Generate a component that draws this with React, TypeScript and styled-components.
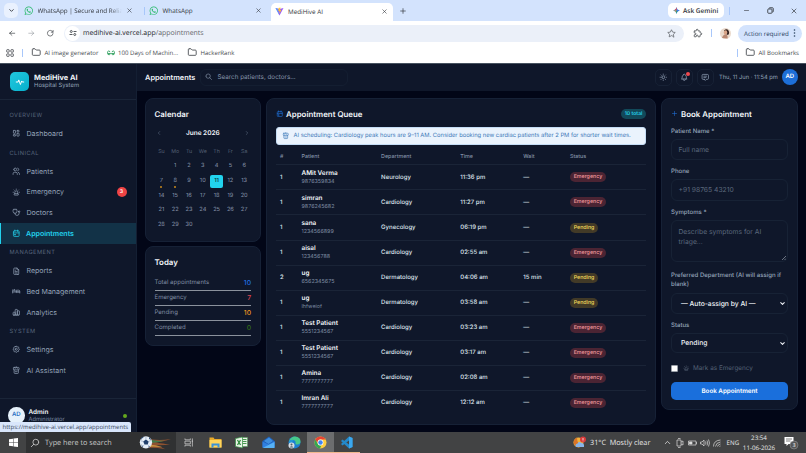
import type { ReactNode } from "react";
import styled, { createGlobalStyle, css } from "styled-components";
import {
  TbArrowLeft,
  TbArrowRight,
  TbBed,
  TbBell,
  TbCalendarEvent,
  TbChartBar,
  TbChevronDown,
  TbChevronLeft,
  TbChevronRight,
  TbChevronUp,
  TbFolder,
  TbFileText,
  TbLayoutDashboard,
  TbLayoutGrid,
  TbMessage2,
  TbMinus,
  TbPlus,
  TbPuzzle,
  TbReload,
  TbSearch,
  TbSettings,
  TbStar,
  TbStethoscope,
  TbSun,
  TbUrgent,
  TbUsers,
  TbX,
} from "react-icons/tb";
import { FaWhatsapp } from "react-icons/fa";

const GlobalStyle = createGlobalStyle`
  * {
    box-sizing: border-box;
  }
  body {
    margin: 0;
    overflow: hidden;
    background: #020617;
    text-rendering: geometricPrecision;
  }
  svg {
    flex-shrink: 0;
    display: block;
  }
`;

const Screen = styled.div`
  width: 806px;
  height: 453px;
  display: flex;
  flex-direction: column;
  overflow: hidden;
  position: relative;
  font-family: "Inter", "Liberation Sans", sans-serif;
  white-space: nowrap;
`;

/* ---------- browser ---------- */

const uiFont = css`
  font-family: "Open Sans", "Noto Sans", sans-serif;
`;

const TabStrip = styled.div`
  height: 21px;
  flex-shrink: 0;
  display: flex;
  align-items: center;
  padding-left: 4px;
  background: #d3e3fd;
  color: #30343a;
  font-size: 6.3px;
  ${uiFont}
`;

const TabSearch = styled.div`
  width: 14px;
  height: 15px;
  margin-right: 6px;
  border-radius: 5px;
  background: #e9f1fe;
  display: flex;
  align-items: center;
  justify-content: center;
`;

const Tab = styled.div<{ $width: number; $active?: boolean }>`
  width: ${({ $width }) => $width}px;
  height: ${({ $active }) => ($active ? "18px" : "15px")};
  margin-top: ${({ $active }) => ($active ? "3px" : "0")};
  padding: ${({ $active }) => ($active ? "0 5px 2px 4px" : "0 6px 0 0")};
  display: flex;
  align-items: center;
  gap: 4px;
  border-radius: 5px 5px 0 0;
  background: ${({ $active }) => ($active ? "#fff" : "transparent")};
`;

const TabTitle = styled.span<{ $fade?: boolean }>`
  flex: 1;
  min-width: 0;
  ${({ $fade }) =>
    $fade && "mask-image: linear-gradient(90deg, #000 85%, transparent);"}
`;

const Divider = styled.i<{ $space: string }>`
  width: 1px;
  height: 8px;
  margin: ${({ $space }) => $space};
  background: #a8c7fa;
  flex-shrink: 0;
`;

const Spacer = styled.div<{ $width?: number }>`
  flex: ${({ $width }) => ($width ? `0 0 ${$width}px` : "1")};
`;

const Gemini = styled.div`
  width: 56px;
  height: 15px;
  display: flex;
  align-items: center;
  gap: 3px;
  padding-left: 5px;
  border-radius: 5px;
  background: #fff;
  font-size: 6.5px;
  font-weight: 600;
`;

const WindowButtons = styled.div`
  display: flex;
  gap: 16.5px;
  padding-right: 8px;
  align-items: center;
`;

const Toolbar = styled.div`
  height: 24px;
  flex-shrink: 0;
  display: flex;
  align-items: center;
  padding: 0 4px 0 8px;
  background: #fff;
  color: #45494e;
  ${uiFont}
`;

const NavButtons = styled.div`
  width: 56px;
  display: flex;
  gap: 10.5px;
`;

const Omnibox = styled.div`
  width: 620px;
  height: 17px;
  padding-right: 8px;
  display: flex;
  align-items: center;
  border-radius: 9px;
  background: #ebf0f9;
  font-size: 6.95px;
  color: #5f6368;
  b {
    font-weight: 400;
    color: #202124;
  }
`;

const SiteInfo = styled.div`
  width: 15px;
  height: 15px;
  margin: 0 3px 0 1px;
  border-radius: 50%;
  background: #fff;
  display: flex;
  align-items: center;
  justify-content: center;
`;

const ActionPill = styled.div`
  width: 64px;
  height: 17px;
  padding: 0 6px;
  display: flex;
  align-items: center;
  justify-content: space-between;
  border-radius: 9px;
  background: #d3e3fd;
  font-size: 6.2px;
  color: #28415f;
`;

const Bookmarks = styled.div`
  height: 18px;
  flex-shrink: 0;
  display: flex;
  align-items: center;
  padding: 0 7px 3px 5px;
  background: #fff;
  color: #474b50;
  font-size: 6.08px;
  ${uiFont}
`;

const Bookmark = styled.div<{ $width?: number }>`
  display: flex;
  align-items: center;
  gap: 3px;
  width: ${({ $width }) => ($width ? `${$width}px` : "auto")};
`;

/* ---------- shell ---------- */

const Shell = styled.div`
  height: 369px;
  flex-shrink: 0;
  display: flex;
  border-top: 1px solid #47525f;
  background: #020617;
`;

const SidebarBox = styled.aside`
  width: 136.5px;
  flex-shrink: 0;
  display: flex;
  flex-direction: column;
  background: #0f172a;
  border-right: 1px solid #141f33;
`;

const Brand = styled.div`
  height: 36px;
  padding: 0 10px;
  display: flex;
  align-items: center;
  gap: 5px;
  border-bottom: 1px solid #1a2538;
`;

const BrandLogo = styled.div`
  width: 19px;
  height: 19px;
  border-radius: 5px;
  background: linear-gradient(135deg, #22c8de, #06b0cc);
  color: #fff;
  display: flex;
  align-items: center;
  justify-content: center;
`;

const BrandName = styled.div`
  font-size: 7.4px;
  font-weight: 700;
  line-height: 9px;
  color: #f1f5f9;
`;

const BrandSub = styled.div`
  padding-top: 0.5px;
  font-size: 5.9px;
  line-height: 8px;
  color: #94a3b8;
`;

const Menu = styled.nav`
  flex: 1;
  padding-top: 6.3px;
`;

const MenuLabel = styled.div`
  height: 16.9px;
  padding: 5.7px 0 0 9.5px;
  font-size: 5.7px;
  line-height: 8px;
  letter-spacing: 0.45px;
  color: #56647a;
`;

const MenuItem = styled.div<{ $active?: boolean }>`
  height: 20.7px;
  padding: 0 9px 0 ${({ $active }) => ($active ? "10.5px" : "12px")};
  display: flex;
  align-items: center;
  gap: 6px;
  font-size: 7.05px;
  font-weight: ${({ $active }) => ($active ? 600 : 400)};
  color: ${({ $active }) => ($active ? "#22d3ee" : "#94a3b8")};
  background: ${({ $active }) => ($active ? "#123247" : "transparent")};
  ${({ $active }) => $active && "border-left: 1.5px solid #22d3ee;"}
`;

const Count = styled.span`
  width: 10px;
  height: 10px;
  margin-left: auto;
  border-radius: 50%;
  background: #ef4444;
  color: #fff;
  font-size: 5.2px;
  font-weight: 600;
  line-height: 10px;
  text-align: center;
`;

const Account = styled.div`
  height: 34px;
  padding: 0 9px 0 8px;
  display: flex;
  align-items: center;
  gap: 4px;
  border-top: 1px solid #1a2538;
`;

const Avatar = styled.div<{ $light?: boolean }>`
  width: 16.5px;
  height: 16.5px;
  flex-shrink: 0;
  border-radius: 50%;
  background: ${({ $light }) => ($light ? "#e6f1fb" : "#1d6fd8")};
  color: ${({ $light }) => ($light ? "#2b72c4" : "#fff")};
  font-size: 6px;
  font-weight: 600;
  line-height: 16.5px;
  text-align: center;
`;

const AccountName = styled.div`
  font-size: 6.4px;
  font-weight: 600;
  line-height: 8px;
  color: #f1f5f9;
`;

const AccountRole = styled.div`
  font-size: 5.7px;
  line-height: 8px;
  color: #7c8ba1;
`;

const Online = styled.i`
  width: 4px;
  height: 4px;
  margin-left: auto;
  border-radius: 50%;
  background: #65a81e;
`;

const LinkStatus = styled.div`
  position: absolute;
  left: 0;
  bottom: 21px;
  width: 131px;
  height: 10.5px;
  padding-left: 2.5px;
  border-top-right-radius: 2px;
  background: #d9e6fb;
  color: #3b4a5e;
  font-size: 6.05px;
  line-height: 10.5px;
  ${uiFont}
`;

const Main = styled.main`
  flex: 1;
  display: flex;
  flex-direction: column;
`;

const TopBar = styled.header`
  height: 27px;
  padding: 0 8px 1px 8.5px;
  display: flex;
  align-items: center;
  background: #0f172a;
`;

const PageTitle = styled.h1`
  width: 55px;
  margin: 0;
  font-size: 7.4px;
  font-weight: 600;
  color: #f1f5f9;
`;

const SearchBox = styled.div`
  width: 148px;
  height: 17px;
  padding-left: 4px;
  display: flex;
  align-items: center;
  gap: 5px;
  border: 1px solid #141e31;
  border-radius: 6px;
  font-size: 6.3px;
  color: #8593a8;
`;

const IconButton = styled.div`
  width: 17px;
  height: 17px;
  margin-right: 4px;
  display: flex;
  align-items: center;
  justify-content: center;
  position: relative;
  border: 1px solid #172135;
  border-radius: 5px;
  color: #94a3b8;
`;

const Alert = styled.i`
  position: absolute;
  top: 2px;
  right: 2px;
  width: 4px;
  height: 4px;
  border-radius: 50%;
  background: #f0484e;
`;

const Clock = styled.span`
  width: 62.5px;
  margin-left: 1px;
  font-size: 5.75px;
  color: #94a3b8;
`;

const Content = styled.div`
  padding: 7px 8px 0;
  display: grid;
  grid-template-columns: 116px 390.5px 137px;
  gap: 5px;
  align-items: start;
`;

const Column = styled.div`
  display: grid;
  gap: 4.5px;
`;

const Card = styled.section<{ $height: number }>`
  height: ${({ $height }) => $height}px;
  padding: 8.5px 9px;
  border: 1px solid #162136;
  border-radius: 8px;
  background: #0f172a;
`;

const CardTitle = styled.h2`
  height: 12px;
  margin: 0;
  display: flex;
  align-items: center;
  gap: 3px;
  font-size: 7.9px;
  font-weight: 600;
  color: #f1f5f9;
  svg {
    color: #1f6fd6;
  }
`;

/* ---------- calendar ---------- */

const MonthRow = styled.div`
  height: 27.5px;
  padding: 0 1.5px;
  display: flex;
  align-items: center;
  justify-content: space-between;
  font-size: 6.5px;
  font-weight: 600;
  color: #f1f5f9;
  svg {
    color: #64748b;
  }
`;

const Days = styled.div`
  display: grid;
  grid-template-columns: repeat(7, 13.8px);
  grid-template-rows: 12.5px;
  grid-auto-rows: 14.8px;
  align-items: center;
  justify-items: center;
`;

const Weekday = styled.span`
  padding-bottom: 3.5px;
  font-size: 5.3px;
  color: #536074;
`;

const Day = styled.span<{ $today?: boolean; $marked?: boolean }>`
  width: 13px;
  height: 13.6px;
  position: relative;
  border-radius: 2px;
  font-size: 5.65px;
  line-height: 13.8px;
  text-align: center;
  color: ${({ $today }) => ($today ? "#0b3a49" : "#8795aa")};
  background: ${({ $today }) => ($today ? "#22d3ee" : "transparent")};
  ${({ $today }) => $today && "font-weight: 600;"}
  ${({ $marked }) =>
    $marked &&
    css`
      &::after {
        content: "";
        position: absolute;
        left: 5.5px;
        bottom: 0.5px;
        width: 2px;
        height: 2px;
        border-radius: 1px;
        background: #c98a1c;
      }
    `}
`;

const Stats = styled.div`
  padding-top: 8.5px;
`;

const Stat = styled.div<{ $color: string }>`
  height: 15.05px;
  padding-bottom: 1px;
  display: flex;
  align-items: center;
  justify-content: space-between;
  border-bottom: 1px solid #8b929d;
  font-size: 6.05px;
  color: #7f8da3;
  b {
    font-size: 6.8px;
    font-weight: 500;
    color: ${({ $color }) => $color};
  }
`;

/* ---------- queue ---------- */

const Total = styled.span`
  height: 10px;
  margin-left: auto;
  padding: 0 3.6px;
  border-radius: 5px;
  background: #12495a;
  color: #25cfe8;
  font-size: 5.1px;
  font-weight: 600;
  line-height: 10px;
`;

const Notice = styled.div`
  height: 17.5px;
  margin-top: 7.5px;
  padding-left: 5.5px;
  display: flex;
  align-items: center;
  gap: 4px;
  border: 1px solid #c4dcf5;
  border-radius: 3px;
  background: #eaf3fd;
  color: #3c78b8;
  font-size: 5.79px;
`;

const QueueRow = styled.div<{ $head?: boolean; $last?: boolean }>`
  height: ${({ $head }) => ($head ? "20.9px" : "25.05px")};
  padding: ${({ $head }) => ($head ? "6px 0 0 4.5px" : "0 0 0 4.5px")};
  display: grid;
  grid-template-columns: 21.5px 79.6px 79.2px 63px 46.7px 1fr;
  align-items: center;
  border-bottom: 1px solid
    ${({ $last }) => ($last ? "transparent" : "#1a2437")};
  font-size: ${({ $head }) => ($head ? "5.35px" : "6px")};
  font-weight: 500;
  color: ${({ $head }) => ($head ? "#8492a7" : "#dfe6ee")};
`;

const PatientName = styled.div`
  font-size: 6.4px;
  font-weight: 600;
  line-height: 9px;
  color: #f1f5f9;
`;

const PatientPhone = styled.div`
  font-size: 5.4px;
  font-weight: 400;
  line-height: 8px;
  color: #7c8aa0;
`;

const Status = styled.span<{ $pending: boolean }>`
  height: 10px;
  padding: 0 3.7px;
  justify-self: start;
  border-radius: 5px;
  font-size: 5.3px;
  font-weight: 500;
  line-height: 10px;
  color: ${({ $pending }) => ($pending ? "#f5dc5c" : "#f49a9f")};
  background: ${({ $pending }) => ($pending ? "#423a27" : "#4b2433")};
`;

/* ---------- form ---------- */

const Label = styled.label<{ $tall?: boolean }>`
  height: ${({ $tall }) => ($tall ? "31px" : "19px")};
  padding-top: ${({ $tall }) => ($tall ? "8.7px" : "8.3px")};
  display: block;
  font-size: 6.05px;
  font-weight: 500;
  line-height: ${({ $tall }) => ($tall ? "9.5px" : "8px")};
  color: #94a3b8;
  white-space: normal;
`;

const Field = styled.div<{ $height?: number; $select?: boolean }>`
  height: ${({ $height }) => $height ?? 21.5}px;
  padding: ${({ $height }) => ($height ? "6px 6.5px" : "1px 6.5px 0")};
  display: flex;
  align-items: ${({ $height }) => ($height ? "flex-start" : "center")};
  justify-content: space-between;
  position: relative;
  border: 1px solid #172235;
  border-radius: 6px;
  font-size: 6.75px;
  line-height: 10px;
  color: #5b687c;
  white-space: normal;
  ${({ $select }) =>
    $select &&
    css`
      height: 20.5px;
      padding: 1px 1px 0 9px;
      font-weight: 500;
      color: #f1f5f9;
    `}
`;

const Grip = styled.svg`
  position: absolute;
  right: 1px;
  bottom: 1px;
`;

const CheckRow = styled.div`
  height: 28.5px;
  padding-top: 2px;
  display: flex;
  align-items: center;
  gap: 4px;
  font-size: 6.4px;
  color: #536074;
`;

const CheckBox = styled.i`
  width: 7px;
  height: 7px;
  margin-right: 0.5px;
  border: 1px solid #9aa0a8;
  border-radius: 1px;
  background: #fff;
`;

const Submit = styled.button`
  display: block;
  width: 100%;
  height: 18.5px;
  padding: 0;
  border: 0;
  border-radius: 5px;
  background: #1a6fdc;
  color: #fff;
  font: 600 6.25px "Inter", sans-serif;
  text-rendering: inherit;
`;

/* ---------- taskbar ---------- */

const Taskbar = styled.footer`
  height: 21px;
  flex-shrink: 0;
  display: flex;
  align-items: center;
  background: #424344;
  color: #e8e8e8;
  ${uiFont}
`;

const StartButton = styled.div`
  width: 26px;
  display: flex;
  justify-content: center;
`;

const TaskSearch = styled.div`
  width: 150px;
  height: 21px;
  padding: 0 4px;
  display: flex;
  align-items: center;
  gap: 5px;
  background: #303132;
  color: #c9c9c9;
  font-size: 7.25px;
`;

const TaskItem = styled.div<{ $running?: boolean; $focused?: boolean }>`
  width: 26.3px;
  height: 21px;
  display: flex;
  align-items: center;
  justify-content: center;
  background: ${({ $focused }) => ($focused ? "#6c6d6e" : "transparent")};
  border-bottom: 1px solid
    ${({ $running }) => ($running ? "#f0b78c" : "transparent")};
`;

const Weather = styled.div`
  margin-left: auto;
  width: 93px;
  display: flex;
  align-items: center;
  gap: 4px;
  font-size: 7.25px;
`;

const Tray = styled.div`
  width: 80px;
  margin-right: -3px;
  margin-left: -3px;
  display: flex;
  align-items: center;
  gap: 3.3px;
  font-size: 6.2px;
`;

const DateTime = styled.div`
  width: 38px;
  font-size: 6.2px;
  line-height: 9.5px;
  text-align: center;
`;

const Notifications = styled.div`
  width: 28px;
  padding-left: 6px;
`;

const RobotIcon = ({ size = 8.5 }: { size?: number }) => (
  <svg
    width={size}
    height={size}
    viewBox="0 0 24 24"
    fill="none"
    stroke="currentColor"
    strokeWidth="2"
    strokeLinecap="round"
    strokeLinejoin="round"
  >
    <path d="M6 4h12a2 2 0 0 1 2 2v3a2 2 0 0 1-2 2H6a2 2 0 0 1-2-2V6a2 2 0 0 1 2-2zM12 2v2M6 11v8q0 2 2 2h8q2 0 2-2v-8M9 7.500v.1M15 7.500v.1M9.500 16h5" />
  </svg>
);

const PulseIcon = () => (
  <svg
    width="10"
    height="10"
    viewBox="0 0 24 24"
    fill="none"
    stroke="#fff"
    strokeWidth="2.4"
    strokeLinecap="round"
    strokeLinejoin="round"
  >
    <path d="M3 12h4.500l1.500-5 4 11 3-8.500 1.500 2.500H21" />
  </svg>
);

const ViteIcon = () => (
  <svg width="9" height="9" viewBox="0 0 18 18">
    <path d="M1 2 9 17 17 2 9 4Z" fill="#9a5cf5" />
    <path d="M1 2 9 17 5 3Z" fill="#54a6f5" />
    <path d="m11 1-4 1v6h2v5l3.500-7h-2z" fill="#ffc531" />
  </svg>
);

const GeminiIcon = () => (
  <svg width="7" height="7" viewBox="0 0 14 14">
    <path d="M7 0Q8 6 14 7 8 8 7 14 6 8 0 7 6 6 7 0" fill="#3b7ded" />
    <path d="M7 0Q8 6 7 7L3 6Q6 6 7 0" fill="#e94b43" />
    <path d="M0 7q6 0 7 0l-1 3Q6 8 0 7" fill="#f2b51e" />
    <path d="M7 14Q6 8 7 7l2 2Q8 9 7 14" fill="#31a653" />
  </svg>
);

const TuneIcon = () => (
  <svg width="8" height="8" viewBox="0 0 16 16" fill="none" stroke="#45494e" strokeWidth="1.8">
    <path d="M9 5h6M1 11h6" />
    <circle cx="4.5" cy="5" r="2" />
    <circle cx="11.5" cy="11" r="2" />
  </svg>
);

const GfgIcon = () => (
  <svg width="8" height="6" viewBox="0 0 18 12" fill="none" stroke="#34a362" strokeWidth="2.2">
    <path d="M7 3a4 4 0 1 0 1 4H1M11 3a4 4 0 1 1-1 4h7" />
  </svg>
);

const ProfilePhoto = () => (
  <svg width="11" height="11" viewBox="0 0 22 22">
    <circle cx="11" cy="11" r="11" fill="#ead9cb" />
    <path d="M8 5q5-5 9 0 3 5-1 9l-5-2z" fill="#35231f" />
    <ellipse cx="11" cy="9" rx="3.5" ry="4.5" fill="#d9a588" />
    <path d="M4 20q2-8 8-7 4 1 3 8" fill="#b98771" />
  </svg>
);

const RestoreIcon = () => (
  <svg width="7" height="7" viewBox="0 0 14 14" fill="none" stroke="#30343a" strokeWidth="1.7">
    <rect x="1.5" y="4" width="8.5" height="8.5" rx="1.5" />
    <path d="M4 3q0-1.500 1.500-1.500H11q1.500 0 1.500 1.500v6q0 1-1.500 1" />
  </svg>
);

const WindowsIcon = () => (
  <svg width="9" height="9" viewBox="0 0 18 18" fill="#fff">
    <path d="M0 2.500 8 1.400V8.500H0zM9 1.200 18 0v8.500H9zM0 9.500h8v7.100L0 15.500zM9 9.500h9V18L9 16.800z" />
  </svg>
);

const FootballArt = () => (
  <svg width="33" height="15.5" viewBox="0 0 72 34">
    <path d="M18 6Q34 14 70 9 48 16 36 17q18 1 32 5-18-1-34 1 14 3 24 8-22-4-42-3z" fill="#8d5130" />
    <path d="M20 9q16 6 36 3-14 5-36 5z" fill="#3f7a4b" />
    <path d="M20 22q16-1 32 5-18-3-32-1z" fill="#d8a044" />
    <circle cx="15" cy="16" r="13.5" fill="#e6eef7" />
    <path d="m15 10 6 4-2 7h-7l-3-7zM3 12l4-5 4-3-5 1zM22 4l5 7-5-2zM4 20l5 5-1 2zM20 26l5-3-4 5z" fill="#22406c" />
    <path d="M15 10V4M21 14l5-2M19 21l3 4M12 21l-4 4M9 14l-5-1" stroke="#6f86a8" strokeWidth="1" />
  </svg>
);

const TaskViewIcon = () => (
  <svg width="10" height="9" viewBox="0 0 22 20" fill="none" stroke="#ddd" strokeWidth="1.5">
    <path d="M2 1v3h12V1M2 19v-3h12v3M2 7h12v6H2zM18.500 1v18M17 7h3" />
  </svg>
);

const ExplorerIcon = () => (
  <svg width="13" height="11" viewBox="0 0 26 22">
    <path d="M1 1h8l2 3h14v17H1z" fill="#e9ab2b" />
    <path d="M1 6h24v15H1z" fill="#ffd65c" />
    <path d="M5 21v-8h16v8h-4v-4H9v4z" fill="#3b93d8" />
  </svg>
);

const ExcelIcon = () => (
  <svg width="13" height="13" viewBox="0 0 26 26">
    <path d="M9 3h16v18H9z" fill="#e9f5e8" stroke="#4a9951" />
    <path d="M15 7h8M15 11h8M15 15h8" stroke="#4a9951" strokeWidth="2" />
    <path d="m1 5 14-3v22L1 21z" fill="#e9f5e8" stroke="#3a8f45" strokeWidth="1.5" />
    <path d="m5 8 6 10m0-10L5 18" stroke="#2f8a3c" strokeWidth="2.6" />
  </svg>
);

const MailIcon = () => (
  <svg width="13" height="13" viewBox="0 0 26 26">
    <path d="M1 10 14 1l11 9v13H1z" fill="#1e5fb8" />
    <path d="M4 10 14 3l8 7-9 6z" fill="#3f8fe0" />
    <path d="m1 11 12 6 12-7v13H1z" fill="#2f7fe0" />
    <path d="m1 24 24-12v12z" fill="#57b2f5" />
  </svg>
);

const EdgeIcon = () => (
  <svg width="13" height="13" viewBox="0 0 26 26">
    <circle cx="13" cy="13" r="12" fill="#1c7fd0" />
    <path d="M2 10Q6 1 14 1q11 1 11 10 0 6-7 6-4 0-3-3 1-5-4-6-5-1-9 2" fill="#47c98b" />
    <path d="M2 11q4-5 10-3-5 3-4 9 2 6 9 7Q2 26 2 11" fill="#2496d8" />
    <circle cx="7" cy="19" r="6" fill="#d5dde4" />
    <circle cx="7" cy="17" r="2" fill="#51606d" />
    <path d="M3 23q4-5 8 0" fill="#51606d" />
  </svg>
);

const ChromeIcon = () => (
  <svg width="13" height="13" viewBox="0 0 26 26">
    <circle cx="13" cy="13" r="12" fill="#ffcd40" />
    <path d="M2.600 7A12 12 0 0 1 23.400 7H13a6 6 0 0 0-5.200 9z" fill="#e94335" />
    <path d="M2.600 7 7.800 16a6 6 0 0 0 7 2.700L12 25A12 12 0 0 1 2.600 7" fill="#34a853" />
    <circle cx="13" cy="13" r="5.800" fill="#fff" />
    <circle cx="13" cy="13" r="4.500" fill="#4285f4" />
  </svg>
);

const CodeIcon = () => (
  <svg width="13" height="13" viewBox="0 0 26 26">
    <path d="m18 1 7 3v18l-7 3L2 10l3-3 13 10V9L5 19l-3-3z" fill="#2489ca" />
    <path d="m18 1 7 3v18l-7 3z" fill="#3ba7ee" />
  </svg>
);

const WeatherIcon = () => (
  <svg width="13" height="13" viewBox="0 0 26 26">
    <circle cx="11" cy="13" r="10" fill="#f2b23c" />
    <path d="M8 3a10 10 0 1 0 11 16Q8 17 8 3" fill="#db7628" />
    <path d="M6 22q-3-6 3-7 3-5 8-1 6 0 5 8z" fill="#88b4e8" />
    <circle cx="20" cy="7" r="6" fill="#d83b3b" />
    <path d="M20 4v4M20 9v1.500" stroke="#fff" strokeWidth="1.500" />
  </svg>
);

const TrayIcons = () => (
  <svg width="48" height="10" viewBox="0 0 96 20" fill="none" stroke="#dcdcdc" strokeWidth="1.4">
    <path d="M4 4h8v12H4zM6 1h5M6 19h5M12 8l4-2v8l-4-2" />
    <path d="M27 6h15v8H27zM43 8v4" />
    <path d="M29 8h5v4h-5z" fill="#dcdcdc" />
    <path d="M51 8h3l4-4v12l-4-4h-3zM61 7q2 3 0 6M64 5q3 5 0 10M67 3q4 7 0 14" />
    <path d="M77 17q0-12 14-13M81 17q1-8 10-9M85 17q1-4 6-5M89 17l2-1" />
  </svg>
);

const NotificationIcon = () => (
  <svg width="15" height="15" viewBox="0 0 30 30">
    <path d="M1 4h18v14H9l-4 4v-4H1z" fill="#fff" />
    <path d="M4 8h12M4 12h9" stroke="#555" strokeWidth="1.500" />
    <circle cx="20" cy="20" r="8" fill="#555657" stroke="#a5a5a5" />
    <text x="20" y="24" fill="#fff" fontSize="11" textAnchor="middle">3</text>
  </svg>
);

type NavEntry = { label: string; icon: ReactNode; count?: number };

const navigation: { title: string; items: NavEntry[] }[] = [
  {
    title: "OVERVIEW",
    items: [{ label: "Dashboard", icon: <TbLayoutDashboard size={8.5} /> }],
  },
  {
    title: "CLINICAL",
    items: [
      { label: "Patients", icon: <TbUsers size={8.5} /> },
      { label: "Emergency", icon: <TbUrgent size={8.5} />, count: 3 },
      { label: "Doctors", icon: <TbStethoscope size={8.5} /> },
      { label: "Appointments", icon: <TbCalendarEvent size={8.5} /> },
    ],
  },
  {
    title: "MANAGEMENT",
    items: [
      { label: "Reports", icon: <TbFileText size={8.5} /> },
      { label: "Bed Management", icon: <TbBed size={8.5} /> },
      { label: "Analytics", icon: <TbChartBar size={8.5} /> },
    ],
  },
  {
    title: "SYSTEM",
    items: [
      { label: "Settings", icon: <TbSettings size={8.5} /> },
      { label: "AI Assistant", icon: <RobotIcon /> },
    ],
  },
];

const queue = [
  ["1", "AMit Verma", "9876359834", "Neurology", "11:36 pm", "—", "Emergency"],
  ["1", "simran", "9876245682", "Cardiology", "11:27 pm", "—", "Emergency"],
  ["1", "sana", "1234566899", "Gynecology", "06:19 pm", "—", "Pending"],
  ["1", "aisal", "123456788", "Cardiology", "02:55 am", "—", "Emergency"],
  ["2", "ug", "6562345675", "Dermatology", "04:06 am", "15 min", "Pending"],
  ["1", "ug", "lhfweiof", "Dermatology", "03:58 am", "—", "Pending"],
  ["1", "Test Patient", "5551234567", "Cardiology", "03:23 am", "—", "Emergency"],
  ["1", "Test Patient", "5551234567", "Cardiology", "03:17 am", "—", "Emergency"],
  ["1", "Amina", "7777777777", "Cardiology", "02:08 am", "—", "Emergency"],
  ["1", "Imran Ali", "7777777777", "Cardiology", "12:12 am", "—", "Emergency"],
];

const stats = [
  { label: "Total appointments", value: 10, color: "#1f6fe0" },
  { label: "Emergency", value: 7, color: "#dc4450" },
  { label: "Pending", value: 10, color: "#ee9420" },
  { label: "Completed", value: 0, color: "#2f6b16" },
];

const Browser = () => (
  <>
    <TabStrip>
      <TabSearch>
        <TbChevronDown size={7} strokeWidth={3} />
      </TabSearch>
      <Tab $width={115}>
        <FaWhatsapp size={9.5} color="#25b866" />
        <TabTitle $fade>WhatsApp | Secure and Reliable</TabTitle>
        <TbX size={7} />
      </Tab>
      <Divider $space="0 4px 0 5px" />
      <Tab $width={119}>
        <FaWhatsapp size={9.5} color="#25b866" />
        <TabTitle>WhatsApp</TabTitle>
        <TbX size={7} />
      </Tab>
      <Spacer $width={3} />
      <Tab $width={122} $active>
        <ViteIcon />
        <TabTitle>MediHive AI</TabTitle>
        <TbX size={7} />
      </Tab>
      <Spacer $width={6} />
      <TbPlus size={8} />
      <Spacer />
      <Gemini>
        <GeminiIcon />
        Ask Gemini
      </Gemini>
      <Divider $space="0 13px 0 5px" />
      <WindowButtons>
        <TbMinus size={7} />
        <RestoreIcon />
        <TbX size={8} />
      </WindowButtons>
    </TabStrip>
    <Toolbar>
      <NavButtons>
        <TbArrowLeft size={8.5} />
        <TbArrowRight size={8.5} color="#a5a9ae" />
        <TbReload size={8.5} />
      </NavButtons>
      <Omnibox>
        <SiteInfo>
          <TuneIcon />
        </SiteInfo>
        <span>
          <b>medihive-ai.vercel.app</b>/appointments
        </span>
        <Spacer />
        <TbStar size={9} />
      </Omnibox>
      <Spacer />
      <TbPuzzle size={10} />
      <Divider $space="0 8px 0 8px" />
      <ProfilePhoto />
      <Spacer $width={7} />
      <ActionPill>
        Action required
        <svg width="3" height="8" viewBox="0 0 3 8" fill="#28415f">
          <circle cx="1.5" cy="1" r=".8" />
          <circle cx="1.5" cy="4" r=".8" />
          <circle cx="1.5" cy="7" r=".8" />
        </svg>
      </ActionPill>
    </Toolbar>
    <Bookmarks>
      <TbLayoutGrid size={10} />
      <Divider $space="0 8px 0 7px" />
      <Bookmark $width={76}>
        <TbFolder size={10.5} />
        AI image generator
      </Bookmark>
      <Bookmark $width={80}>
        <GfgIcon />
        100 Days of Machin...
      </Bookmark>
      <Bookmark>
        <TbFolder size={10.5} />
        HackerRank
      </Bookmark>
      <Spacer />
      <Divider $space="0 7px 0 0" />
      <Bookmark>
        <TbFolder size={10.5} />
        All Bookmarks
      </Bookmark>
    </Bookmarks>
  </>
);

const Sidebar = () => (
  <SidebarBox>
    <Brand>
      <BrandLogo>
        <PulseIcon />
      </BrandLogo>
      <div>
        <BrandName>MediHive AI</BrandName>
        <BrandSub>Hospital System</BrandSub>
      </div>
    </Brand>
    <Menu>
      {navigation.map((group) => (
        <div key={group.title}>
          <MenuLabel>{group.title}</MenuLabel>
          {group.items.map((item) => (
            <MenuItem key={item.label} $active={item.label === "Appointments"}>
              {item.icon}
              {item.label}
              {item.count && <Count>{item.count}</Count>}
            </MenuItem>
          ))}
        </div>
      ))}
    </Menu>
    <Account>
      <Avatar $light>AD</Avatar>
      <div>
        <AccountName>Admin</AccountName>
        <AccountRole>Administrator</AccountRole>
      </div>
      <Online />
    </Account>
  </SidebarBox>
);

const CalendarCard = () => (
  <Card $height={143.5}>
    <CardTitle>Calendar</CardTitle>
    <MonthRow>
      <TbChevronLeft size={6} />
      June 2026
      <TbChevronRight size={6} />
    </MonthRow>
    <Days>
      {["Su", "Mo", "Tu", "We", "Th", "Fr", "Sa"].map((day) => (
        <Weekday key={day}>{day}</Weekday>
      ))}
      <span />
      {Array.from({ length: 30 }, (_, i) => i + 1).map((day) => (
        <Day key={day} $today={day === 11} $marked={day === 7 || day === 8}>
          {day}
        </Day>
      ))}
    </Days>
  </Card>
);

const TodayCard = () => (
  <Card $height={100}>
    <CardTitle>Today</CardTitle>
    <Stats>
      {stats.map((stat) => (
        <Stat key={stat.label} $color={stat.color}>
          {stat.label}
          <b>{stat.value}</b>
        </Stat>
      ))}
    </Stats>
  </Card>
);

const QueueCard = () => (
  <Card $height={327}>
    <CardTitle>
      <TbCalendarEvent size={7.5} />
      Appointment Queue
      <Total>10 total</Total>
    </CardTitle>
    <Notice>
      <RobotIcon size={7.5} />
      AI scheduling: Cardiology peak hours are 9–11 AM. Consider booking new
      cardiac patients after 2 PM for shorter wait times.
    </Notice>
    <QueueRow $head>
      {["#", "Patient", "Department", "Time", "Wait", "Status"].map((name) => (
        <span key={name}>{name}</span>
      ))}
    </QueueRow>
    {queue.map(([no, name, phone, department, time, wait, status], i) => (
      <QueueRow key={i} $last={i === queue.length - 1}>
        <span>{no}</span>
        <div>
          <PatientName>{name}</PatientName>
          <PatientPhone>{phone}</PatientPhone>
        </div>
        <span>{department}</span>
        <span>{time}</span>
        <span>{wait}</span>
        <Status $pending={status === "Pending"}>{status}</Status>
      </QueueRow>
    ))}
  </Card>
);

const BookingCard = () => (
  <Card $height={312}>
    <CardTitle>
      <TbPlus size={7} />
      Book Appointment
    </CardTitle>
    <Label>Patient Name *</Label>
    <Field>Full name</Field>
    <Label>Phone</Label>
    <Field>+91 98765 43210</Field>
    <Label>Symptoms *</Label>
    <Field $height={42.5}>
      Describe symptoms for AI triage...
      <Grip width="4" height="4" viewBox="0 0 4 4" stroke="#aab2bd" strokeWidth=".6">
        <path d="M0 4 4 0M2.500 4 4 2.500" />
      </Grip>
    </Field>
    <Label $tall>Preferred Department (AI will assign if blank)</Label>
    <Field $select>
      — Auto-assign by AI —
      <TbChevronDown size={7} strokeWidth={3.5} />
    </Field>
    <Label>Status</Label>
    <Field $select>
      Pending
      <TbChevronDown size={7} strokeWidth={3.5} />
    </Field>
    <CheckRow>
      <CheckBox />
      <TbUrgent size={6.5} />
      Mark as Emergency
    </CheckRow>
    <Submit>Book Appointment</Submit>
  </Card>
);

const WindowsTaskbar = () => (
  <Taskbar>
    <StartButton>
      <WindowsIcon />
    </StartButton>
    <TaskSearch>
      <TbSearch size={10} style={{ transform: "scaleX(-1)" }} />
      Type here to search
      <Spacer />
      <FootballArt />
    </TaskSearch>
    <TaskItem>
      <TaskViewIcon />
    </TaskItem>
    <TaskItem>
      <ExplorerIcon />
    </TaskItem>
    <TaskItem>
      <ExcelIcon />
    </TaskItem>
    <TaskItem>
      <MailIcon />
    </TaskItem>
    <TaskItem>
      <EdgeIcon />
    </TaskItem>
    <TaskItem $running $focused>
      <ChromeIcon />
    </TaskItem>
    <TaskItem $running>
      <CodeIcon />
    </TaskItem>
    <Weather>
      <WeatherIcon />
      31°C&nbsp; Mostly clear
    </Weather>
    <Tray>
      <TbChevronUp size={9} />
      <TrayIcons />
      ENG
    </Tray>
    <DateTime>
      23:54
      <br />
      11-06-2026
    </DateTime>
    <Notifications>
      <NotificationIcon />
    </Notifications>
  </Taskbar>
);

const App = () => {
  return (
    <Screen>
      <GlobalStyle />
      <Browser />
      <Shell>
        <Sidebar />
        <Main>
          <TopBar>
            <PageTitle>Appointments</PageTitle>
            <SearchBox>
              <TbSearch size={7.5} />
              Search patients, doctors...
            </SearchBox>
            <Spacer />
            <IconButton>
              <TbSun size={8.5} />
            </IconButton>
            <IconButton>
              <TbBell size={8.5} />
              <Alert />
            </IconButton>
            <IconButton>
              <TbMessage2 size={8.5} />
            </IconButton>
            <Clock>Thu, 11 Jun · 11:54 pm</Clock>
            <Avatar>AD</Avatar>
          </TopBar>
          <Content>
            <Column>
              <CalendarCard />
              <TodayCard />
            </Column>
            <QueueCard />
            <BookingCard />
          </Content>
        </Main>
      </Shell>
      <WindowsTaskbar />
      <LinkStatus>https://medihive-ai.vercel.app/appointments</LinkStatus>
    </Screen>
  );
};

export default App;
